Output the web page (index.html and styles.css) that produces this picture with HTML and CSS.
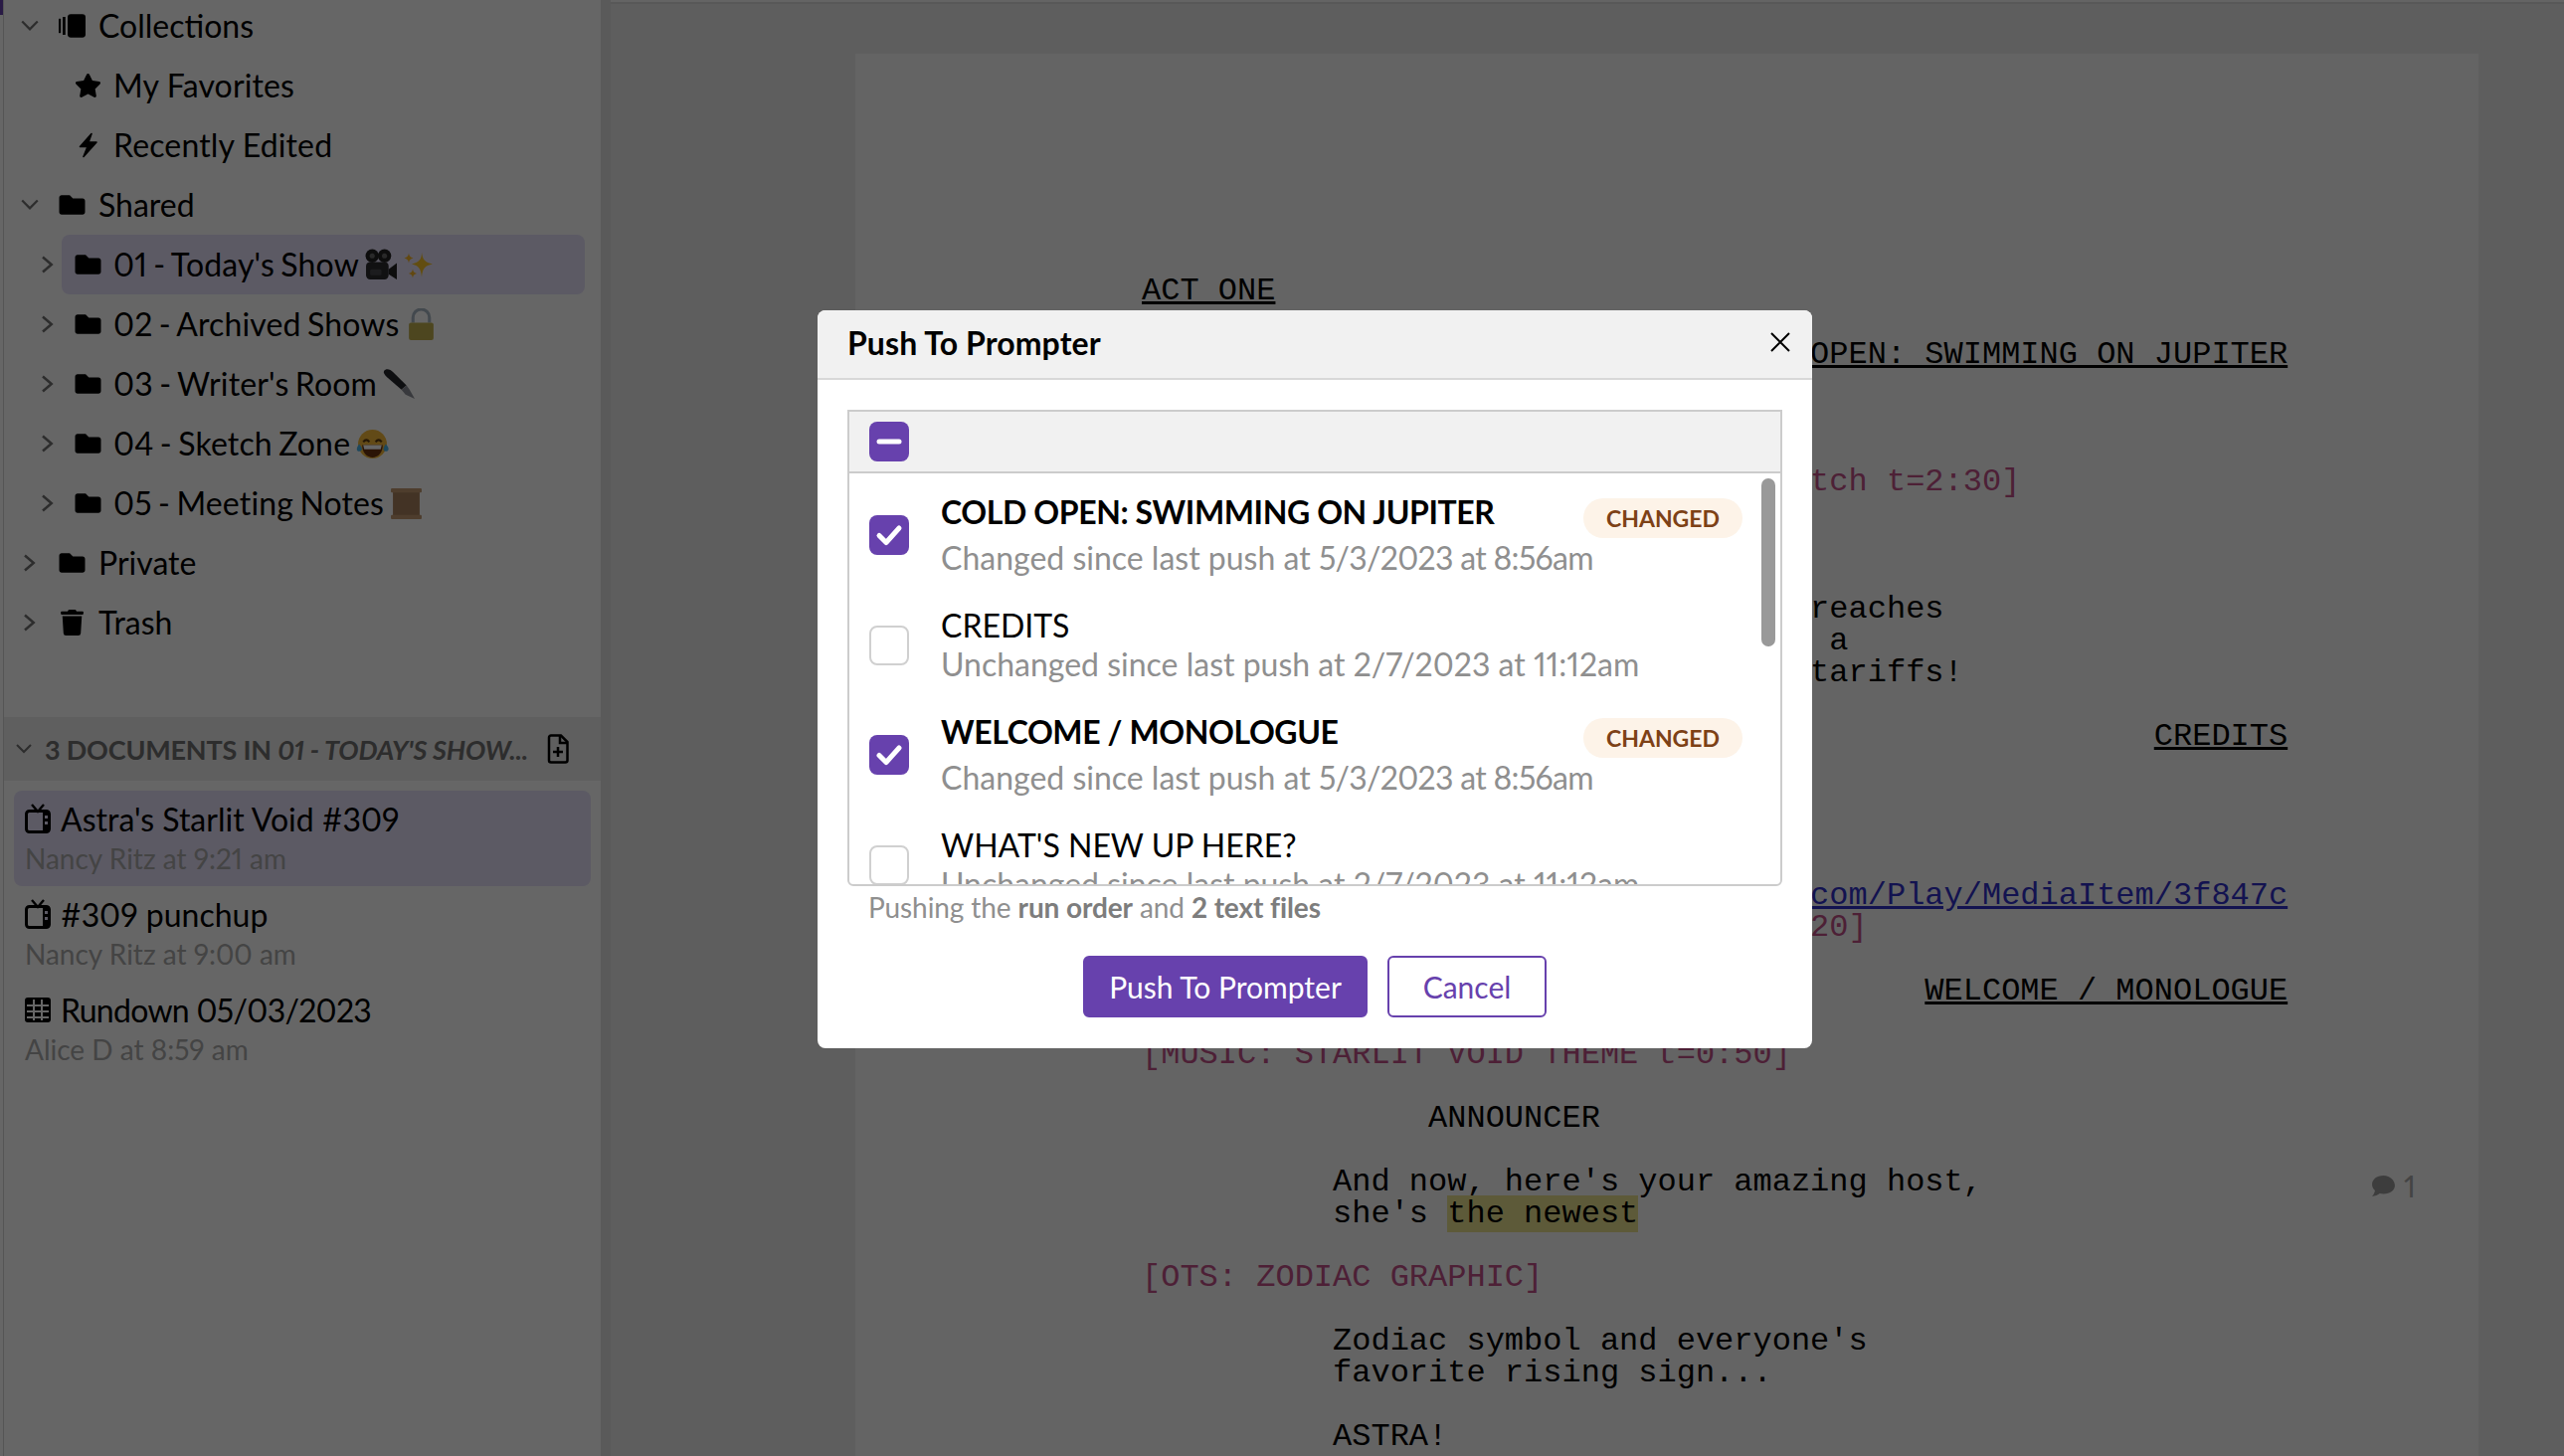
FILE: index.html
```html
<!DOCTYPE html>
<html lang="en">
<head>
    <meta charset="UTF-8">
    <meta name="viewport" content="width=device-width, initial-scale=1.0">
    <title>Push To Prompter</title>
    <link rel="stylesheet" href="styles.css">
</head>
<body>
    <svg class="defs" width="0" height="0" aria-hidden="true">
        <symbol id="i-folder" viewBox="0 0 512 512"><path d="M464 128H272l-64-64H48C21.49 64 0 85.49 0 112v288c0 26.51 21.49 48 48 48h416c26.51 0 48-21.49 48-48V176c0-26.51-21.49-48-48-48z"/></symbol>
        <symbol id="i-star" viewBox="0 0 576 512"><path d="M259.3 17.8L194 150.2 47.9 171.5c-26.2 3.8-36.7 36.1-17.7 54.6l105.7 103-25 145.5c-4.5 26.3 23.2 46 46.4 33.7L288 439.6l130.7 68.7c23.2 12.2 50.9-7.4 46.4-33.7l-25-145.5 105.7-103c19-18.5 8.5-50.8-17.7-54.6L382 150.2 316.7 17.8c-11.7-23.6-45.6-23.9-57.4 0z"/></symbol>
        <symbol id="i-trash" viewBox="0 0 448 512"><path d="M432 32H312l-9.4-18.7A24 24 0 0 0 281.1 0H166.8a23.72 23.72 0 0 0-21.4 13.3L136 32H16A16 16 0 0 0 0 48v32a16 16 0 0 0 16 16h416a16 16 0 0 0 16-16V48a16 16 0 0 0-16-16zM53.2 467a48 48 0 0 0 47.9 45h245.8a48 48 0 0 0 47.9-45L416 128H32z"/></symbol>
        <symbol id="i-right" viewBox="0 0 12 16"><path d="M2 2l7 6-7 6" fill="none" stroke="#707070" stroke-width="2"/></symbol>
        <symbol id="i-down" viewBox="0 0 18 12"><path d="M2 2l7 7 7-7" fill="none" stroke="#707070" stroke-width="2"/></symbol>
        <symbol id="i-tv" viewBox="0 0 26 30"><path d="M7 1l6 7 6-7" fill="none" stroke="#000" stroke-width="2.4"/><rect x="1.5" y="7.5" width="23" height="21" rx="3" fill="none" stroke="#000" stroke-width="3"/><rect x="18" y="7" width="7" height="22" rx="2"/><rect x="20" y="12" width="3" height="3" fill="#e6e1fa"/><rect x="20" y="18" width="3" height="3" fill="#e6e1fa"/></symbol>
        <symbol id="i-check" viewBox="0 0 40 40"><path d="M10 20.5l7 7L30 13" fill="none" stroke="#fff" stroke-width="5" stroke-linecap="round" stroke-linejoin="round"/></symbol>
    </svg>

    <div class="app">
        <div class="rail"><div class="rail-mark"></div></div>

        <aside class="sidebar">
            <div class="tree">
                <div class="row">
                    <svg class="caret"><use href="#i-down"/></svg>
                    <svg class="icon" viewBox="0 0 30 26"><rect x="0" y="5" width="2.4" height="16"/><rect x="4.5" y="3" width="3" height="20"/><rect x="10" y="0" width="20" height="26" rx="3.5"/></svg>
                    <span class="label">Collections</span>
                </div>
                <div class="row sub">
                    <span class="caret"></span>
                    <div class="pill">
                        <svg class="icon"><use href="#i-star"/></svg>
                        <span class="label">My Favorites</span>
                    </div>
                </div>
                <div class="row sub">
                    <span class="caret"></span>
                    <div class="pill">
                        <svg class="icon" viewBox="0 0 27 26"><path d="M17 1.500L5.500 14.500h7.500L9 24.500l13-14.500h-8l3-8.500z" stroke="#000" stroke-width="1.600" stroke-linejoin="round"/></svg>
                        <span class="label">Recently Edited</span>
                    </div>
                </div>
                <div class="row">
                    <svg class="caret"><use href="#i-down"/></svg>
                    <svg class="icon"><use href="#i-folder"/></svg>
                    <span class="label">Shared</span>
                </div>
                <div class="row sub">
                    <svg class="caret"><use href="#i-right"/></svg>
                    <div class="pill active">
                        <svg class="icon"><use href="#i-folder"/></svg>
                        <span class="label show">01 - Today's Show</span>
                        <svg class="emoji" viewBox="0 0 32 32"><circle cx="7" cy="7" r="6.500" fill="#222"/><circle cx="19" cy="7" r="6.500" fill="#222"/><circle cx="7" cy="7" r="2.500" fill="#666"/><circle cx="19" cy="7" r="2.500" fill="#666"/><rect x="1" y="13" width="22" height="17" rx="4" fill="#2b2b2e"/><rect x="5" y="20" width="11" height="6" rx="1.500" fill="#48484d"/><path d="M23 20l8-6v16l-8-5z" fill="#222"/></svg>
                        <svg class="emoji spark" viewBox="0 0 30 32"><path d="M18 3c1 8 3 10 11 12-8 2-10 4-11 13-1-9-3-11-10-13 7-2 10-4 10-12z" fill="#f4c12b"/><path d="M5 4c.5 3 1.500 4 4.500 5C6.500 10 5.500 11 5 14c-.5-3-1.500-4-4.500-5C3.500 8 4.500 7 5 4zM9 20c.5 2.500 1 3.500 4 4.500-3 1-3.500 2-4 4.500-.5-2.500-1-3.500-4-4.500 3-1 3.500-2 4-4.500z" fill="#f4b52b"/></svg>
                    </div>
                </div>
                <div class="row sub">
                    <svg class="caret"><use href="#i-right"/></svg>
                    <div class="pill">
                        <svg class="icon"><use href="#i-folder"/></svg>
                        <span class="label show">02 - Archived Shows</span>
                        <svg class="emoji" viewBox="0 0 26 32"><path d="M5 14V9a8 8 0 0 1 16 0v5" fill="none" stroke="#a9b6c4" stroke-width="3"/><rect x="1" y="14" width="24" height="17" rx="2" fill="#c0b04e"/></svg>
                    </div>
                </div>
                <div class="row sub">
                    <svg class="caret"><use href="#i-right"/></svg>
                    <div class="pill">
                        <svg class="icon"><use href="#i-folder"/></svg>
                        <span class="label show">03 - Writer's Room</span>
                        <svg class="emoji" viewBox="0 0 32 32"><path d="M1 3c2-3 6-2 9 1l13 13-5 4L4 9C2 7 0 5 1 3z" fill="#25262c"/><path d="M18 21l5-4 3 4 5 9-9-4z" fill="#8d9098"/></svg>
                    </div>
                </div>
                <div class="row sub">
                    <svg class="caret"><use href="#i-right"/></svg>
                    <div class="pill">
                        <svg class="icon"><use href="#i-folder"/></svg>
                        <span class="label show">04 - Sketch Zone</span>
                        <svg class="emoji" viewBox="0 0 32 32"><circle cx="16" cy="16" r="14" fill="#f5b93a"/><path d="M7 14q3-4 6 0M19 14q3-4 6 0" fill="none" stroke="#5b3a10" stroke-width="2"/><path d="M6 17h20c0 8-5 12-10 12S6 25 6 17z" fill="#6b3210"/><path d="M7 17h18l-1 4H8z" fill="#fff"/><path d="M3 16c-3 4-3 7 0 7s4-3 0-7zM29 16c4 4 3 7 0 7s-3-3 0-7z" fill="#4cb4e8"/></svg>
                    </div>
                </div>
                <div class="row sub">
                    <svg class="caret"><use href="#i-right"/></svg>
                    <div class="pill">
                        <svg class="icon"><use href="#i-folder"/></svg>
                        <span class="label show">05 - Meeting Notes</span>
                        <svg class="emoji" viewBox="0 0 32 32"><rect x="3" y="3" width="26" height="26" fill="#a8805c"/><rect x="1" y="1" width="30" height="4" rx="1" fill="#c29a72"/><rect x="1" y="27" width="30" height="4" rx="1" fill="#c29a72"/></svg>
                    </div>
                </div>
                <div class="row">
                    <svg class="caret"><use href="#i-right"/></svg>
                    <svg class="icon"><use href="#i-folder"/></svg>
                    <span class="label">Private</span>
                </div>
                <div class="row">
                    <svg class="caret"><use href="#i-right"/></svg>
                    <svg class="icon trash"><use href="#i-trash"/></svg>
                    <span class="label">Trash</span>
                </div>
            </div>

            <div class="docs-head">
                <svg class="docs-caret"><use href="#i-down"/></svg>
                <span class="docs-title">3 DOCUMENTS IN <em>01 - TODAY'S SHOW...</em></span>
                <svg class="docs-add" viewBox="0 0 22 30"><path d="M2 3.500A2 2 0 0 1 4 1.500h10l6.500 6.500v18.500a2 2 0 0 1-2 2H4a2 2 0 0 1-2-2z" fill="none" stroke="#000" stroke-width="2.500"/><path d="M13 2v7h7M11 13v10M6 18h10" fill="none" stroke="#000" stroke-width="2.500"/></svg>
            </div>

            <div class="docs">
                <div class="doc active">
                    <div class="doc-name"><svg class="doc-icon"><use href="#i-tv"/></svg>Astra's Starlit Void #309</div>
                    <div class="doc-meta">Nancy Ritz at 9:21 am</div>
                </div>
                <div class="doc">
                    <div class="doc-name"><svg class="doc-icon"><use href="#i-tv"/></svg>#309 punchup</div>
                    <div class="doc-meta">Nancy Ritz at 9:00 am</div>
                </div>
                <div class="doc">
                    <div class="doc-name"><svg class="doc-icon" viewBox="0 0 26 30"><rect x="0" y="3" width="26" height="25" rx="3"/><path d="M2 11h22M2 17h22M2 23h22M9 5v21M17 5v21" stroke="#fff" stroke-width="2"/></svg><span class="doc-date">Rundown 05/03/2023</span></div>
                    <div class="doc-meta">Alice D at 8:59 am</div>
                </div>
            </div>
        </aside>

        <div class="gutter"></div>

        <main class="main">
            <div class="toolbar"></div>
            <div class="page">
<pre class="script"><u>ACT ONE</u>

                              <u>COLD OPEN: SWIMMING ON JUPITER</u>



<span class="cue">[VIDEO: Astra swims on Jupiter, sketch t=2:30]</span>



Astra's mission to Jupiter finally reaches
the planet just in time to announce a
rounds of hefty new interplanetary tariffs!

                                                     <u>CREDITS</u>




<span class="cue">[VTR: </span><a href="#">https://prompter.starlitvoid.com/Play/MediaItem/3f847c</a>
<span class="cue">Astra floats past the moons t=0:00:20]</span>

                                         <u>WELCOME / MONOLOGUE</u>

<span class="cue">[MUSIC: STARLIT VOID THEME t=0:50]</span>

               ANNOUNCER

          And now, here's your amazing host,
          she's <mark>the newest</mark>

<span class="cue">[OTS: ZODIAC GRAPHIC]</span>

          Zodiac symbol and everyone's
          favorite rising sign...

          ASTRA!</pre>
                <div class="comment-tag">
                    <svg class="comment-icon" viewBox="0 0 24 22"><path d="M12 1C5.400 1 1 4.800 1 9.500c0 2.300 1 4.300 2.800 5.800-.4 2.200-1.500 4.200-2.800 5.700 3 0 5.600-1.200 7.400-2.700 1.100.3 2.300.4 3.600.4 6.600 0 11-3.800 11-8.200S18.600 1 12 1z"/></svg>
                    <span>1</span>
                </div>
            </div>
        </main>
    </div>

    <div class="overlay">
        <div class="modal">
            <div class="modal-head">
                <h2>Push To Prompter</h2>
                <svg class="close" viewBox="0 0 20 20"><path d="M1 1l18 18M19 1L1 19" fill="none" stroke="#000" stroke-width="2"/></svg>
            </div>
            <div class="modal-body">
                <div class="picker">
                    <div class="picker-head">
                        <span class="box on"><svg viewBox="0 0 40 40"><path d="M10 20h20" stroke="#fff" stroke-width="5" stroke-linecap="round"/></svg></span>
                    </div>
                    <div class="picker-list">
                        <div class="item changed">
                            <span class="box on"><svg><use href="#i-check"/></svg></span>
                            <div class="item-text">
                                <div class="item-top"><span class="item-name">COLD OPEN: SWIMMING ON JUPITER</span><span class="badge">CHANGED</span></div>
                                <div class="item-sub">Changed since last push at <span class="when">5/3/2023 at 8:56am</span></div>
                            </div>
                        </div>
                        <div class="item">
                            <span class="box"></span>
                            <div class="item-text">
                                <div class="item-top"><span class="item-name">CREDITS</span></div>
                                <div class="item-sub">Unchanged since last push at 2/7/2023 at 11:12am</div>
                            </div>
                        </div>
                        <div class="item changed">
                            <span class="box on"><svg><use href="#i-check"/></svg></span>
                            <div class="item-text">
                                <div class="item-top"><span class="item-name">WELCOME / MONOLOGUE</span><span class="badge">CHANGED</span></div>
                                <div class="item-sub">Changed since last push at <span class="when">5/3/2023 at 8:56am</span></div>
                            </div>
                        </div>
                        <div class="item">
                            <span class="box"></span>
                            <div class="item-text">
                                <div class="item-top"><span class="item-name">WHAT'S NEW UP HERE?</span></div>
                                <div class="item-sub">Unchanged since last push at 2/7/2023 at 11:12am</div>
                            </div>
                        </div>
                        <div class="scroll-thumb"></div>
                    </div>
                </div>
                <p class="summary">Pushing the <b>run order</b> and <b>2 text files</b></p>
                <div class="actions">
                    <button class="btn primary">Push To Prompter</button>
                    <button class="btn ghost">Cancel</button>
                </div>
            </div>
        </div>
    </div>
</body>
</html>
```

FILE: styles.css
```css
* {
    box-sizing: border-box;
}
html, body {
    margin: 0;
    height: 100%;
    overflow: hidden;
}
body {
    font-family: Lato, "Open Sans", sans-serif;
    font-variant-numeric: proportional-nums;
    background-color: #ebebeb;
    color: #000;
}
.defs {
    position: absolute;
}
.app {
    display: flex;
    height: 1464px;
    overflow: hidden;
}

/* left edge */
.rail {
    width: 3px;
    flex: none;
    background-color: #fff;
}
.rail-mark {
    height: 15px;
    background-color: #6741ad;
}

/* sidebar */
.sidebar {
    width: 601px;
    flex: none;
    background-color: #fff;
    border-left: 1px solid #d4d4d4;
    display: flex;
    flex-direction: column;
}
.tree {
    margin-top: -4px;
    height: 725px;
    flex: none;
}
.row {
    display: flex;
    align-items: center;
    height: 60px;
    padding-left: 16px;
    font-size: 32px;
}
.label {
    padding-bottom: 2px;
}
.pill .label {
    letter-spacing: 0.15px;
}
.label.show {
    word-spacing: -2px;
}
.caret {
    width: 20px;
    height: 20px;
    flex: none;
    margin-right: 19px;
}
.icon {
    width: 27px;
    height: 26px;
    flex: none;
    margin-right: 13px;
}
.row.sub {
    padding-left: 34px;
}
.row.sub .caret {
    margin-right: 4px;
}
.pill {
    display: flex;
    align-items: center;
    width: 526px;
    height: 60px;
    padding-left: 13px;
    border-radius: 8px;
}
.pill .icon {
    margin-right: 12px;
}
.pill.active {
    background-color: #e6e1fa;
}
.emoji {
    width: 33px;
    height: 33px;
    margin-left: 6px;
    flex: none;
}
.emoji.spark {
    margin-left: 6px;
    width: 30px;
}
.docs-head {
    display: flex;
    align-items: center;
    height: 64px;
    flex: none;
    padding-left: 11px;
    background-color: #eeeeee;
}
.docs-caret {
    width: 18px;
    height: 12px;
    flex: none;
    margin-right: 12px;
}
.docs-title {
    font-size: 27px;
    font-weight: 700;
    letter-spacing: -0.2px;
    color: #707070;
    white-space: nowrap;
    width: 505px;
}
.docs-add {
    width: 22px;
    height: 30px;
    flex: none;
}
.docs {
    padding: 10px 10px 0 10px;
}
.doc {
    height: 96px;
    padding: 6px 0 0 11px;
    border-radius: 8px;
}
.doc.active {
    background-color: #e6e1fa;
}
.doc-name {
    display: flex;
    align-items: center;
    height: 44px;
    font-size: 32px;
    white-space: nowrap;
}
.doc-date {
    letter-spacing: -0.7px;
}
.doc-icon {
    width: 26px;
    height: 30px;
    flex: none;
    margin-right: 10px;
}
.doc-meta {
    height: 38px;
    line-height: 36px;
    font-size: 28px;
    color: #aaaaaa;
}

.gutter {
    width: 10px;
    flex: none;
    background-color: #e2e2e2;
}

/* script page */
.main {
    flex: 1;
    min-width: 0;
    background-color: #ebebeb;
    overflow: hidden;
}
.toolbar {
    height: 4px;
    background-color: #fafafa;
    border-bottom: 2px solid #dcdcdc;
}
.page {
    position: relative;
    width: 1632px;
    height: 1500px;
    margin: 50px 0 0 246px;
    padding: 223px 0 0 288px;
    background-color: #fafafa;
}
.script {
    margin: 0;
    font-family: "Liberation Mono", monospace;
    font-size: 32px;
    line-height: 32px;
}
.cue {
    color: #c05088;
}
.script a {
    color: #3030c8;
}
.script mark {
    background-color: #e9e28f;
}
.comment-tag {
    position: absolute;
    left: 1524px;
    top: 1120px;
    display: flex;
    align-items: center;
    gap: 8px;
    font-size: 30px;
    color: #aaaaaa;
}
.comment-icon {
    width: 25px;
    height: 23px;
    fill: #999999;
}

/* dialog */
.overlay {
    position: fixed;
    top: 0;
    left: 0;
    right: 0;
    bottom: 0;
    background-color: rgba(0, 0, 0, 0.6);
}
.modal {
    position: absolute;
    left: 822px;
    top: 312px;
    width: 1000px;
    height: 742px;
    background-color: #fff;
    border-radius: 8px;
    overflow: hidden;
}
.modal-head {
    display: flex;
    align-items: center;
    justify-content: space-between;
    height: 70px;
    padding: 0 22px 4px 30px;
    background-color: #f1f1f1;
    border-bottom: 2px solid #d8d8d8;
}
.modal-head h2 {
    margin: 0;
    font-size: 32px;
    font-weight: 700;
    letter-spacing: 0.1px;
}
.close {
    width: 20px;
    height: 20px;
}
.modal-body {
    padding: 30px 30px 0 30px;
}
.picker {
    height: 479px;
    border: 2px solid #cccccc;
    border-radius: 0 0 6px 6px;
    overflow: hidden;
    display: flex;
    flex-direction: column;
}
.picker-head {
    height: 62px;
    flex: none;
    display: flex;
    align-items: center;
    padding-left: 20px;
    background-color: #f1f1f1;
    border-bottom: 2px solid #cccccc;
}
.box {
    display: block;
    width: 40px;
    height: 40px;
    flex: none;
    border: 2px solid #d0d0d0;
    border-radius: 8px;
    background-color: #fff;
}
.box.on {
    border: none;
    background-color: #6741ad;
}
.box svg {
    display: block;
    width: 40px;
    height: 40px;
}
.picker-list {
    position: relative;
    flex: 1;
    min-height: 0;
    overflow: hidden;
    padding-top: 5px;
}
.item {
    display: flex;
    align-items: center;
    gap: 32px;
    padding: 14px 38px 14px 20px;
}
.item-text {
    flex: 1;
    min-width: 0;
}
.item-top {
    display: flex;
    justify-content: space-between;
    align-items: flex-start;
    height: 39px;
    line-height: 39px;
    font-size: 32px;
}
.item.changed .item-top {
    height: 46px;
}
.item.changed .item-name {
    font-weight: 700;
    letter-spacing: -0.4px;
}
.item-sub {
    height: 40px;
    line-height: 40px;
    font-size: 32px;
    color: #8f8f8f;
    white-space: nowrap;
}
.when {
    letter-spacing: -0.7px;
}
.badge {
    width: 160px;
    height: 40px;
    line-height: 40px;
    margin-top: 6px;
    text-align: center;
    border-radius: 20px;
    font-size: 23px;
    font-weight: 700;
    color: #7d4116;
    background-color: #fdf3e8;
}
.scroll-thumb {
    position: absolute;
    right: 5px;
    top: 5px;
    width: 14px;
    height: 169px;
    border-radius: 7px;
    background-color: #999999;
}
.summary {
    margin: 6px 0 0 21px;
    height: 30px;
    line-height: 30px;
    font-size: 28px;
    letter-spacing: -0.1px;
    color: #8f8f8f;
}
.summary b {
    color: #7d7d7d;
}
.actions {
    display: flex;
    justify-content: center;
    gap: 20px;
    margin: 34px 0 0 -66px;
    padding-left: 66px;
}
.btn {
    height: 62px;
    font-family: inherit;
    font-size: 30px;
    border-radius: 6px;
    border: 2px solid #6741ad;
}
.btn.primary {
    width: 286px;
    color: #fff;
    background-color: #6741ad;
}
.btn.ghost {
    width: 160px;
    color: #6741ad;
    background-color: #fff;
}
```
